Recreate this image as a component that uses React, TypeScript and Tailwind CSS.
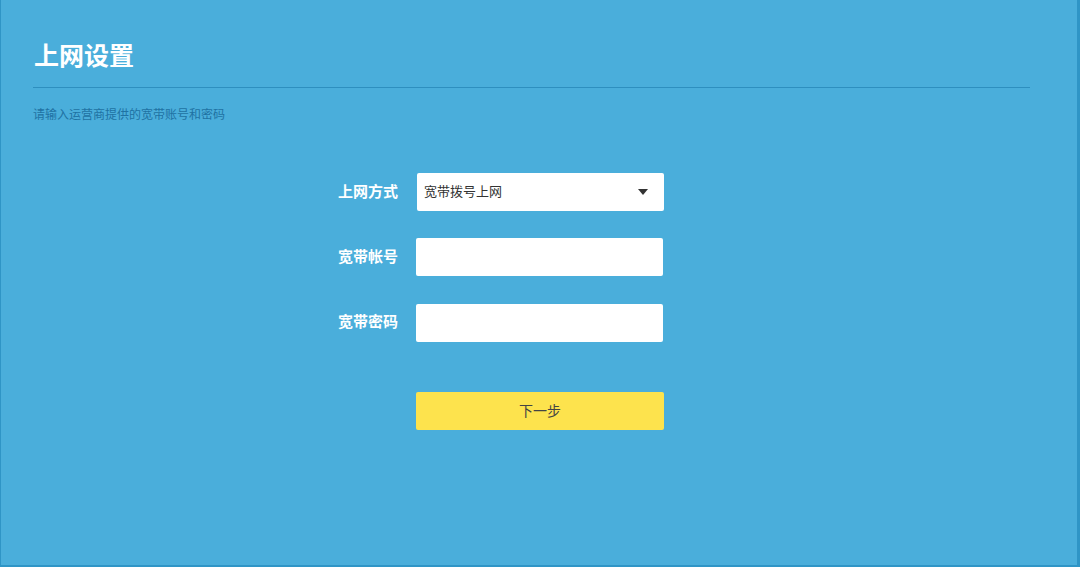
import React from 'react';

const font = { fontFamily: '"Liberation Sans", "Noto Sans CJK SC", sans-serif' };

function Field({ label, children }: { label: string; children: React.ReactNode }) {
    return (
        <div className="flex items-center">
            <div className="w-[97px] pr-[18px] text-right text-[15px] font-bold text-white">{label}</div>
            {children}
        </div>
    );
}

export default function App() {
    return (
        <div
            style={font}
            className="h-[567px] w-[1080px] overflow-hidden border-b-2 border-l border-r-[3px] border-[#2f95c6] bg-[#4aaedb]"
        >
            <div className="px-[32px] pt-[40px]">
                <h1 className="pl-[1px] text-[25px] font-bold leading-[32px] text-white">上网设置</h1>
                <div className="mt-[15px] h-[1px] w-[997px] bg-[#2e8fbf]" />
                <p className="mt-[19px] text-[12px] leading-[16px] text-[#1f72a3]">请输入运营商提供的宽带账号和密码</p>
            </div>

            <div className="ml-[318px] mt-[50px] flex flex-col gap-[27px]">
                <Field label="上网方式">
                    <div className="ml-[1px] flex h-[38px] w-[247px] items-center justify-between rounded-[2px] bg-white pl-[7px] pr-[16px]">
                        <span className="text-[13px] text-[#333]">宽带拨号上网</span>
                        <svg width="10" height="6" viewBox="0 0 10 6">
                            <path d="M0 0 L10 0 L5 6 Z" fill="#333" />
                        </svg>
                    </div>
                </Field>
                <Field label="宽带帐号">
                    <div className="h-[38px] w-[247px] rounded-[2px] bg-white" />
                </Field>
                <Field label="宽带密码">
                    <div className="mt-[1px] h-[38px] w-[247px] rounded-[2px] bg-white" />
                </Field>
                <div className="ml-[97px] mt-[23px]">
                    <div className="flex h-[38px] w-[248px] items-center justify-center rounded-[2px] bg-[#fde34d] text-[14px] text-[#444]">
                        下一步
                    </div>
                </div>
            </div>
        </div>
    );
}
